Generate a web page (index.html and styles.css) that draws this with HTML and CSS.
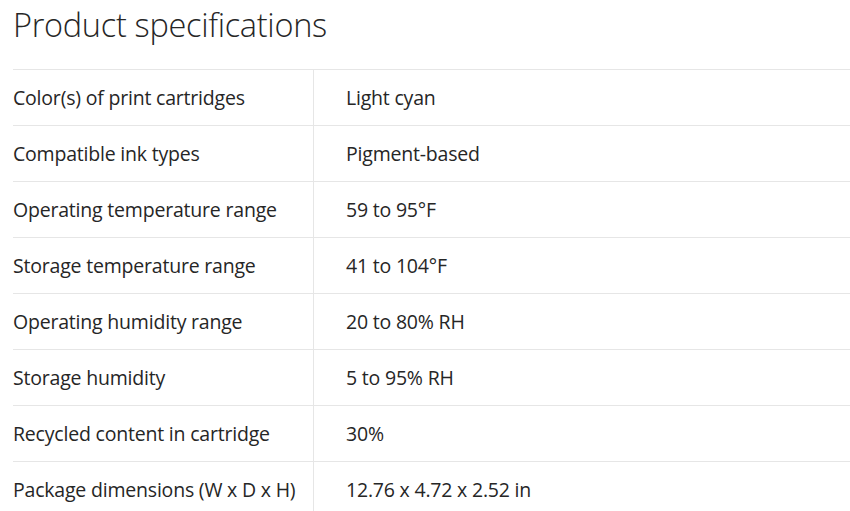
FILE: index.html
```html
<!DOCTYPE html>
<html>
<head>
<meta charset="utf-8">
<link rel="stylesheet" href="styles.css">
</head>
<body>
<div class="page">
  <h1 class="title">Product specifications</h1>
  <table class="specs">
    <tr><td class="label">Color(s) of print cartridges</td><td class="value">Light cyan</td></tr>
    <tr><td class="label">Compatible ink types</td><td class="value">Pigment-based</td></tr>
    <tr><td class="label">Operating temperature range</td><td class="value">59 to 95°F</td></tr>
    <tr><td class="label">Storage temperature range</td><td class="value">41 to 104°F</td></tr>
    <tr><td class="label">Operating humidity range</td><td class="value">20 to 80% RH</td></tr>
    <tr><td class="label">Storage humidity</td><td class="value">5 to 95% RH</td></tr>
    <tr><td class="label">Recycled content in cartridge</td><td class="value">30%</td></tr>
    <tr><td class="label">Package dimensions (W x D x H)</td><td class="value">12.76 x 4.72 x 2.52 in</td></tr>
  </table>
</div>
</body>
</html>
```
FILE: styles.css
```css
html, body { margin: 0; padding: 0; background: #fff; }
body { font-family: "Open Sans", "Liberation Sans", sans-serif; color: #262626; }
.page { padding: 0 0 0 13px; }
.title {
  margin: 0;
  padding-top: 3px;
  font-size: 32.5px;
  font-weight: 300;
  line-height: 44px;
  height: 66px;
  letter-spacing: -0.3px;
}
.specs { width: 100%; border-collapse: collapse; }
.specs td {
  border-top: 1px solid #e6e6e6;
  height: 55px;
  padding: 0;
  font-size: 19.5px;
  font-weight: 400;
  vertical-align: middle;
  letter-spacing: -0.2px;
}
.specs .label { width: 300px; border-right: 1px solid #e6e6e6; }
.specs .value { padding-left: 32px; }
```
